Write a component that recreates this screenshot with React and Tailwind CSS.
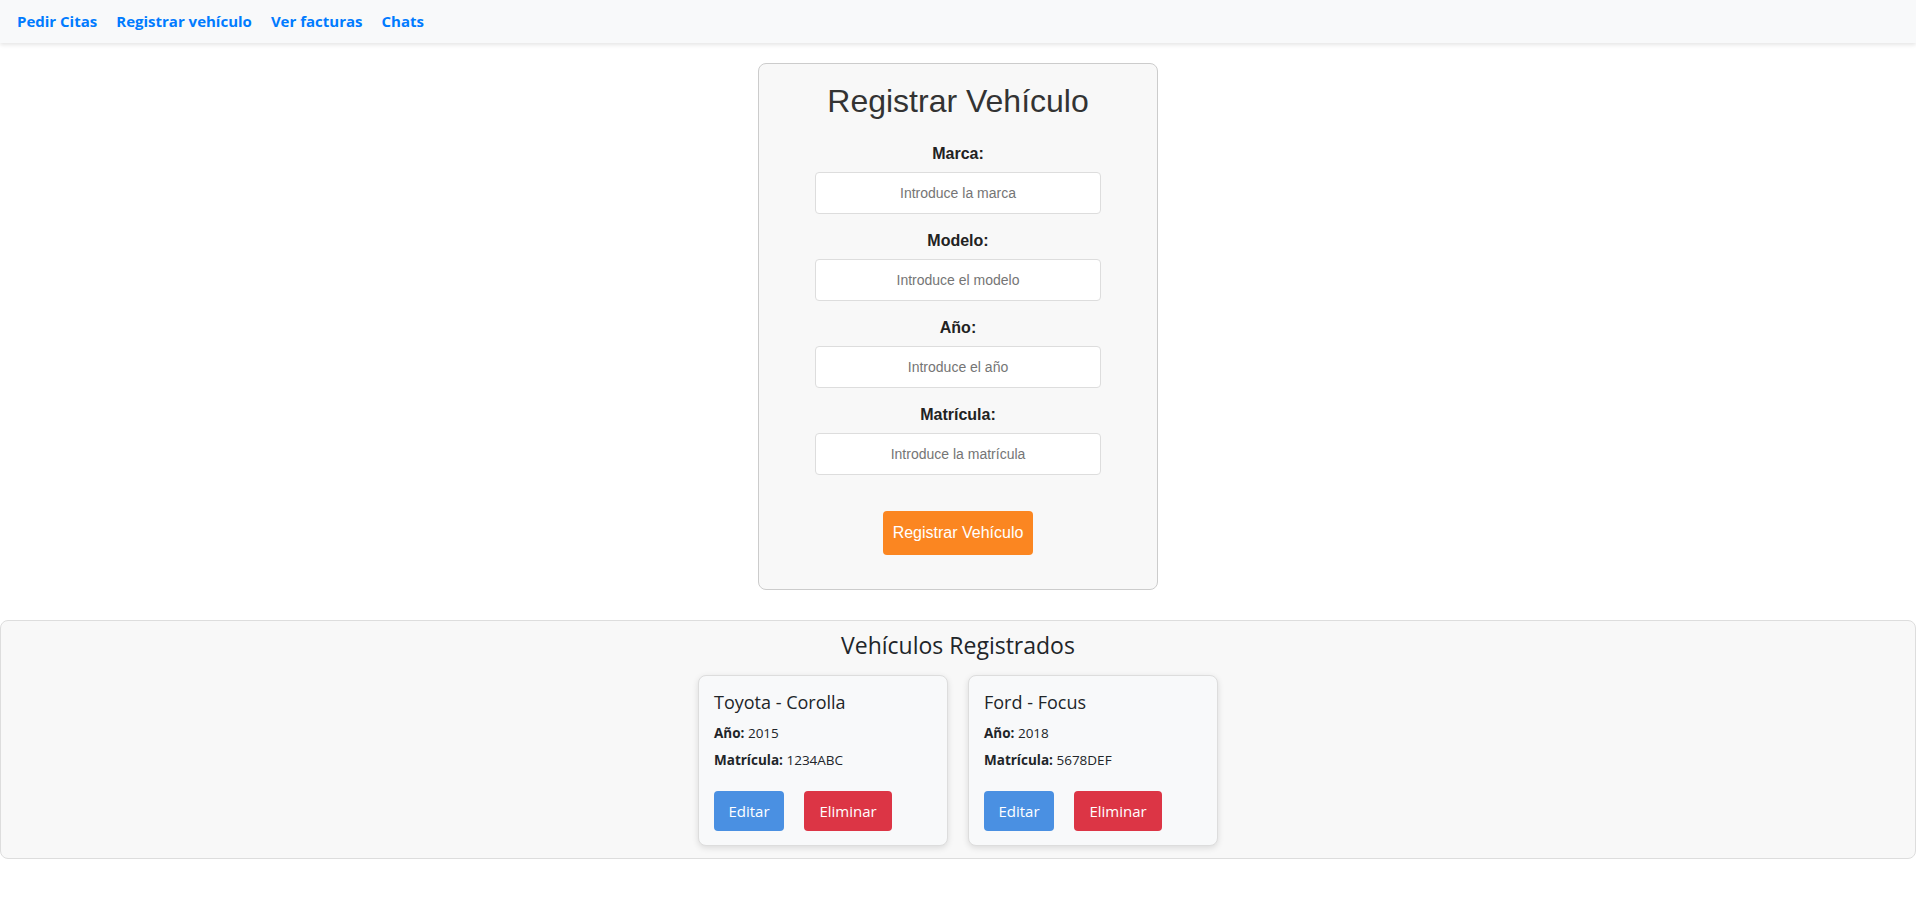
const fields = [
  { label: "Marca:", placeholder: "Introduce la marca" },
  { label: "Modelo:", placeholder: "Introduce el modelo" },
  { label: "Año:", placeholder: "Introduce el año" },
  { label: "Matrícula:", placeholder: "Introduce la matrícula" },
];

const vehicles = [
  { marca: "Toyota", modelo: "Corolla", anio: 2015, matricula: "1234ABC" },
  { marca: "Ford", modelo: "Focus", anio: 2018, matricula: "5678DEF" },
];

const NavBar = () => (
  <nav className="h-[43px] bg-[#f8f9fa] shadow-[0_2px_4px_rgba(0,0,0,0.1)] flex items-center pl-[17px] gap-[19px] font-['Open_Sans',sans-serif] font-bold text-[15px] text-[#007bff]">
    <a href="#">Pedir Citas</a>
    <a href="#">Registrar vehículo</a>
    <a href="#">Ver facturas</a>
    <a href="#">Chats</a>
  </nav>
);

const VehicleForm = () => (
  <div className="w-[400px] mx-auto mt-[20px] bg-[#f8f8f8] border border-[#ccc] rounded-lg pt-[19px] pb-[34px] px-5 font-['Liberation_Sans',Arial,sans-serif] text-center">
    <h2 className="text-[32px] leading-[36px] text-[#333] mb-[26px]">Registrar Vehículo</h2>
    <div className="flex flex-col gap-[18px]">
      {fields.map((f) => (
        <div key={f.label} className="flex flex-col items-center">
          <label className="block font-bold text-[16px] leading-[18px] text-[#222] mb-[9px]">{f.label}</label>
          <input
            type="text"
            placeholder={f.placeholder}
            className="w-[286px] h-[42px] bg-white border border-[#ddd] rounded text-center text-[14px] placeholder:text-[#757575] outline-none"
          />
        </div>
      ))}
    </div>
    <button className="mt-[36px] w-[150px] h-[44px] bg-[#fb8621] text-white text-[16px] rounded">
      Registrar Vehículo
    </button>
  </div>
);

const VehicleCard = ({ v }) => (
  <div className="w-[250px] h-[171px] bg-[#f8f9fa] border border-[#ddd] rounded-lg shadow-[0_2px_6px_rgba(0,0,0,0.12)] px-[15px] pt-[14px] text-[#212529]">
    <h3 className="text-[18px] font-medium leading-[24px] mb-[10px]">{v.marca} - {v.modelo}</h3>
    <p className="text-[13.5px] leading-[18px] mb-[9px]"><b>Año:</b> {v.anio}</p>
    <p className="text-[13.5px] leading-[18px]"><b>Matrícula:</b> {v.matricula}</p>
    <div className="flex gap-[20px] mt-[22px]">
      <button className="w-[70px] h-[40px] bg-[#4a90e2] text-white text-[15px] rounded">Editar</button>
      <button className="w-[88px] h-[40px] bg-[#dc3545] text-white text-[15px] rounded">Eliminar</button>
    </div>
  </div>
);

export default function App() {
  return (
    <div className="min-h-screen bg-white">
      <NavBar />
      <VehicleForm />
      <section className="mt-[30px] bg-[#f8f8f8] border border-[#ddd] rounded-lg pt-[8px] pb-[12px] font-['Open_Sans',sans-serif]">
        <h2 className="text-center text-[23px] font-medium leading-[32px] text-[#212529] mb-[14px]">Vehículos Registrados</h2>
        <div className="flex justify-center gap-[20px]">
          {vehicles.map((v) => (
            <VehicleCard key={v.matricula} v={v} />
          ))}
        </div>
      </section>
    </div>
  );
}
